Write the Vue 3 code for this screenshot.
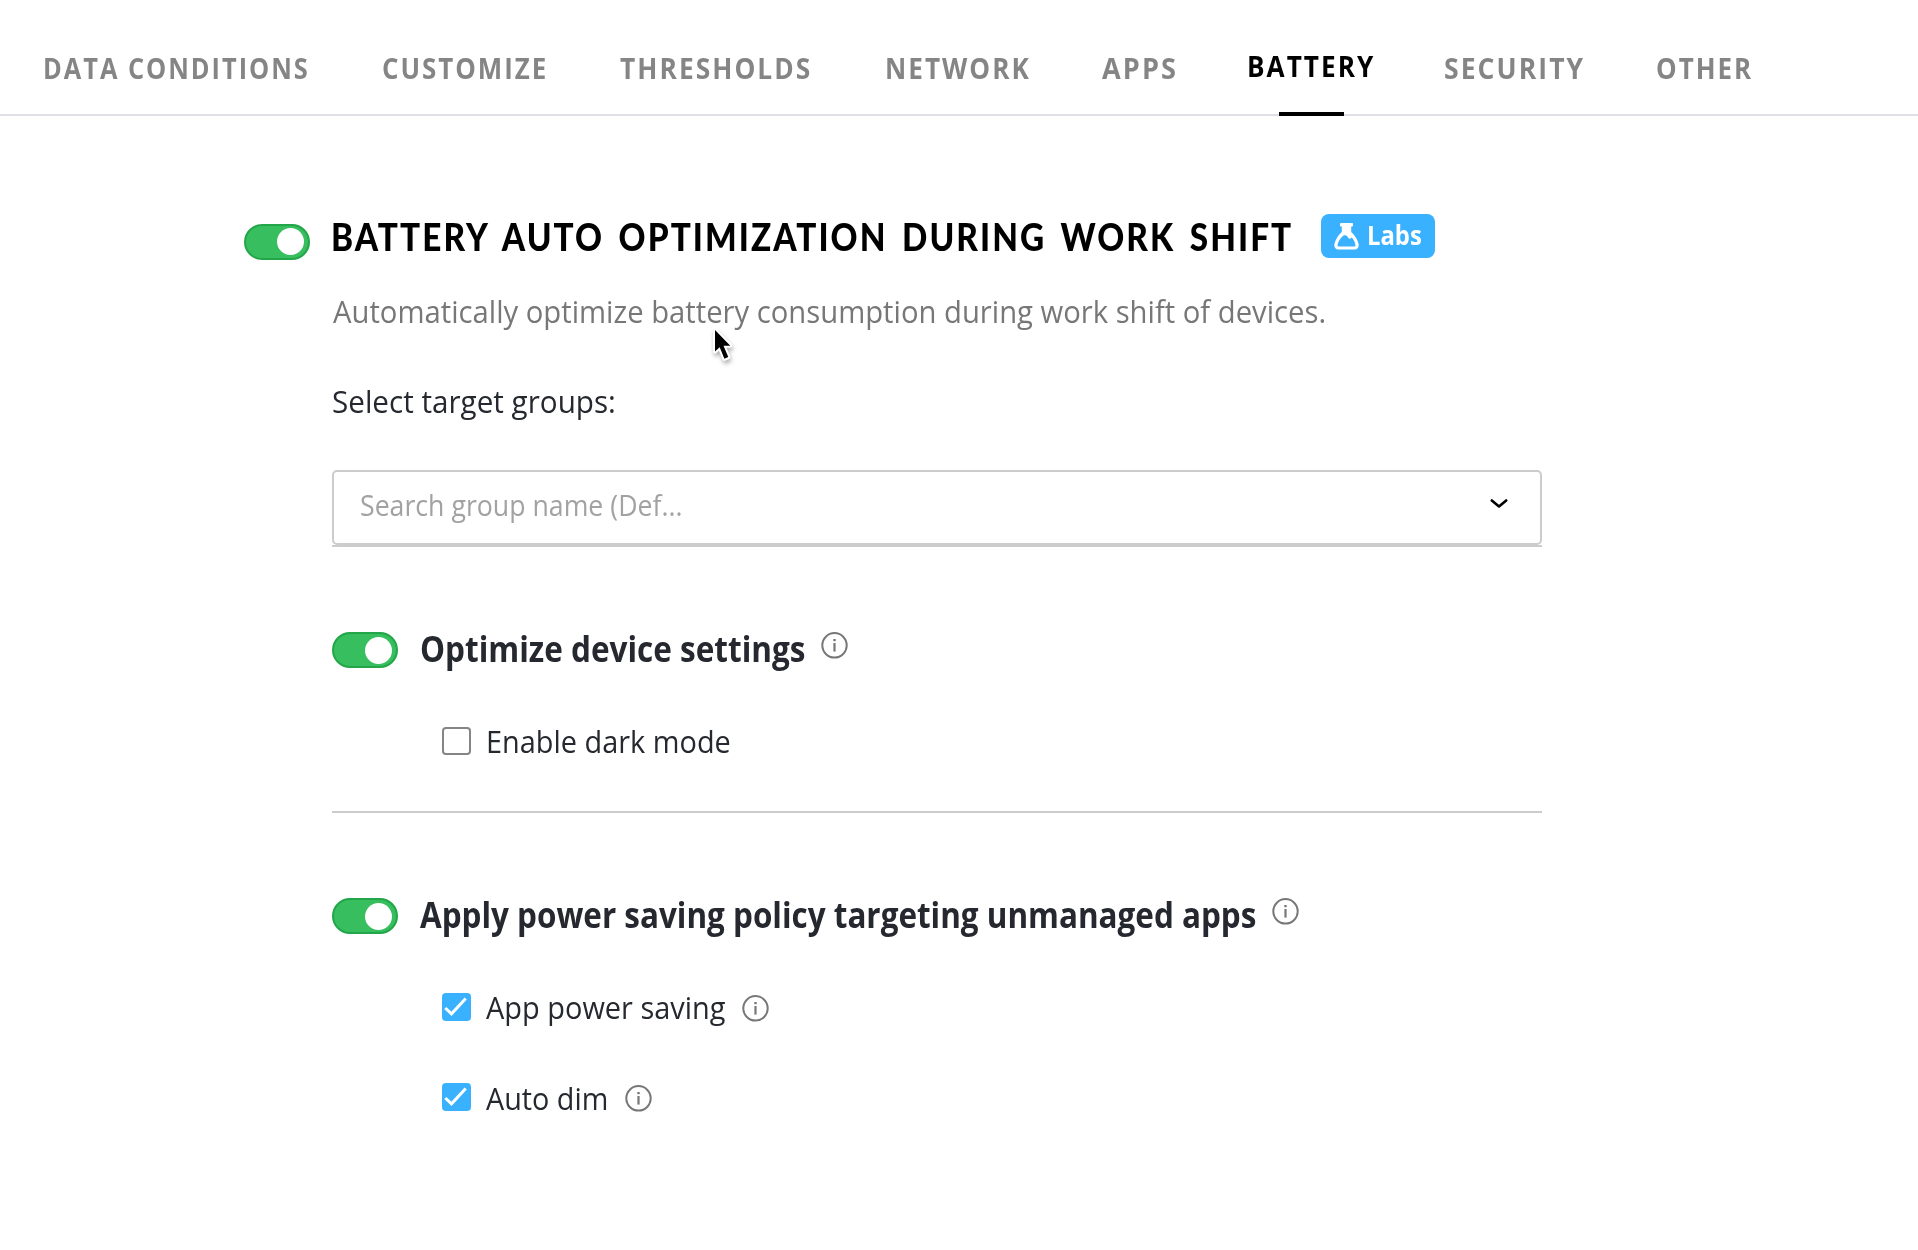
<script setup>
import { h } from 'vue'

// pitch: distance to the next tab, scale: horizontal condensing of the label
const tabs = [
  { label: 'DATA CONDITIONS', pitch: 339.2, scale: 0.891 },
  { label: 'CUSTOMIZE', pitch: 238.6, scale: 0.908 },
  { label: 'THRESHOLDS', pitch: 265, scale: 0.924 },
  { label: 'NETWORK', pitch: 216.7, scale: 0.917 },
  { label: 'APPS', pitch: 144.6, scale: 0.951 },
  { label: 'BATTERY', pitch: 197.2, scale: 0.918, active: true },
  { label: 'SECURITY', pitch: 212.1, scale: 0.932 },
  { label: 'OTHER', pitch: 100, scale: 0.91 },
]

const groups = [
  {
    title: 'Optimize device settings',
    width: 399.5,
    scale: 0.9,
    options: [{ label: 'Enable dark mode', width: 244, scale: 0.932, checked: false, info: false }],
  },
  {
    title: 'Apply power saving policy targeting unmanaged apps',
    width: 850.5,
    scale: 0.898,
    options: [
      { label: 'App power saving', width: 256, scale: 0.934, checked: true, info: true },
      { label: 'Auto dim', width: 138.5, scale: 0.928, checked: true, info: true },
    ],
  },
]

const InfoIcon = () =>
  h('svg', { width: 27, height: 27, viewBox: '0 0 27 27', fill: 'none' }, [
    h('circle', { cx: 13.5, cy: 13.3, r: 12.2, stroke: '#777', 'stroke-width': 2 }),
    h('rect', { x: 12.3, y: 7, width: 2.4, height: 2.2, fill: '#777' }),
    h('rect', { x: 12.4, y: 11, width: 2.2, height: 8.6, fill: '#777' }),
  ])
</script>

<template>
  <div class="page">
    <nav class="tabs">
      <a
        v-for="tab in tabs"
        :key="tab.label"
        class="tab"
        :class="{ active: tab.active }"
        :style="{ width: tab.pitch + 'px', '--sx': tab.scale }"
      >
        <span class="fit">{{ tab.label }}</span>
      </a>
    </nav>

    <main class="content">
      <header class="head">
        <span class="toggle"></span>
        <h1><span class="fit">BATTERY AUTO OPTIMIZATION DURING WORK SHIFT</span></h1>
        <span class="badge">
          <svg width="25" height="27" viewBox="0 0 25 27" fill="#fff">
            <path
              fill-rule="evenodd"
              d="M7 0h11a1 1 0 0 1 1 1v1.500a1 1 0 0 1-1 1h-.8v5.500c3.200 2.800 6 6.800 7.200 11.200 1 3.800-.6 6.400-3.800 6.400H4.400c-3.200 0-4.800-2.600-3.800-6.400C1.800 15.800 4.600 11.800 7.800 9V3.500H7a1 1 0 0 1-1-1V1a1 1 0 0 1 1-1zM8.600 13.200c-2.400 2.400-4.200 5-4.900 8-.4 1.600 0 2.400 1.100 2.400h15.400c1.100 0 1.500-.8 1.100-2.400-.6-2.500-1.900-4.700-3.400-6.600-1 .9-2.100 1.600-3 1-1.200-1-1.300-3-2.900-3.200-1-.1-2.500-.2-3.400.8z"
            />
          </svg>
          <span class="fit">Labs</span>
        </span>
      </header>

      <div class="body">
        <p class="desc"><span class="fit">Automatically optimize battery consumption during work shift of devices.</span></p>
        <p class="target"><span class="fit">Select target groups:</span></p>

        <div class="select-wrap">
          <div class="select">
            <span class="placeholder"><span class="fit">Search group name (Def...</span></span>
            <svg width="18" height="10" viewBox="0 0 18 10" fill="none" stroke="#000" stroke-width="2.6" stroke-linecap="round" stroke-linejoin="round">
              <path d="M1.800 1.500 9 7.500l7.200-6" />
            </svg>
          </div>
        </div>

        <section v-for="group in groups" :key="group.title" class="group">
          <div class="group-head">
            <span class="toggle"></span>
            <h2 :style="{ width: group.width + 'px', '--sx': group.scale }">
              <span class="fit">{{ group.title }}</span>
            </h2>
            <InfoIcon class="info" />
          </div>
          <div class="options">
            <label v-for="option in group.options" :key="option.label" class="option">
              <span class="check" :class="{ on: option.checked }">
                <svg v-if="option.checked" width="28" height="28" viewBox="0 0 28 28" fill="none" stroke="#fff" stroke-width="3">
                  <path d="M3.300 15 9.500 20.800 23.700 5.600" />
                </svg>
              </span>
              <span class="option-label" :style="{ width: option.width + 'px', '--sx': option.scale }">
                <span class="fit">{{ option.label }}</span>
              </span>
              <InfoIcon v-if="option.info" class="info" />
            </label>
          </div>
        </section>
      </div>
    </main>

    <svg class="cursor" width="36" height="46" viewBox="0 0 36 46">
      <path
        d="M15 10v21.500l4.700-4.300 4.700 11.600 3.900-1.700-4.800-11.300h6.800z"
        fill="#000"
        stroke="#fff"
        stroke-width="4"
        stroke-linejoin="round"
        paint-order="stroke"
      />
    </svg>
  </div>
</template>

<style>
body {
  background: #fff;
}
</style>

<style scoped>
.page {
  position: relative;
  width: 1918px;
  height: 1250px;
  overflow: hidden;
  background: #fff;
  color: #25282e;
  font-family: 'Open Sans', 'Noto Sans', sans-serif;
}

h1,
h2,
p {
  margin: 0;
}

svg {
  display: block;
  flex: none;
}

.fit {
  display: inline-block;
  white-space: nowrap;
  transform: scaleX(var(--sx));
  transform-origin: 0 50%;
}

.tabs {
  display: flex;
  box-sizing: border-box;
  height: 116px;
  padding-left: 42.5px;
  border-bottom: 2px solid #dee0e6;
}

.tab {
  position: relative;
  flex: none;
  box-sizing: border-box;
  height: 116px;
  padding-top: 48px;
  font-size: 28.5px;
  font-weight: 700;
  line-height: 40px;
  letter-spacing: 2.2px;
  color: #858585;
}

.tab.active {
  padding-top: 46px;
  color: #000;
}

.tab.active::after {
  content: '';
  position: absolute;
  left: 32px;
  bottom: 0;
  width: 65px;
  height: 4px;
  background: #000;
}

.content {
  padding: 98px 0 0 244px;
}

.head {
  display: flex;
  height: 44px;
}

.toggle {
  flex: none;
  display: flex;
  justify-content: flex-end;
  align-items: center;
  box-sizing: border-box;
  width: 66px;
  height: 36px;
  padding-right: 4px;
  border: 2px solid #22a649;
  border-radius: 18px;
  background: #37be5f;
}

.toggle::after {
  content: '';
  width: 27px;
  height: 27px;
  border-radius: 50%;
  background: #fff;
}

.head .toggle {
  margin-top: 9.500px;
}

h1 {
  --sx: 0.9;
  width: 990px;
  margin-left: 21px;
  font: 900 37px/46px Lato, sans-serif;
  letter-spacing: 2.3px;
  word-spacing: 5px;
  color: #000;
}

.badge {
  --sx: 0.917;
  display: flex;
  flex: none;
  align-items: center;
  box-sizing: border-box;
  width: 114px;
  height: 44px;
  padding-left: 12.5px;
  border-radius: 8px;
  background: #3ab1ff;
  color: #fff;
  font-size: 26px;
  font-weight: 700;
  line-height: 41px;
}

.badge .fit {
  margin: -1px 0 0 8px;
}

.body {
  width: 1210px;
  margin-left: 88px;
}

.desc,
.target {
  height: 40px;
  font-size: 31px;
  line-height: 40px;
}

.desc {
  --sx: 0.943;
  margin: 33px 0 0 1px;
  color: #777;
}

.target {
  --sx: 0.956;
  margin-top: 50px;
  color: #25282e;
}

.select-wrap {
  margin-top: 49px;
  border-bottom: 2px solid #ccc;
}

.select {
  display: flex;
  justify-content: space-between;
  box-sizing: border-box;
  height: 75px;
  padding: 12px 32px 0 26px;
  border: 2px solid #ccc;
  border-radius: 5px;
}

.placeholder {
  --sx: 0.92;
  margin-top: 1px;
  font-size: 29px;
  line-height: 40px;
  color: #a2a2a2;
}

.select svg {
  margin-top: 14.500px;
}

.group {
  height: 181px;
  padding-top: 83px;
  border-bottom: 2px solid #ccc;
}

.group:last-child {
  border-bottom: 0;
}

.group-head {
  display: flex;
  height: 36px;
}

.group-head .toggle {
  margin-top: 2px;
}

h2 {
  flex: none;
  margin-left: 22px;
  font-size: 35px;
  font-weight: 700;
  line-height: 38px;
}

.group-head .info {
  margin-top: 2px;
  margin-left: 1.500px;
}

.options {
  display: flex;
  flex-direction: column;
  gap: 50px;
  margin: 55px 0 0 110px;
}

.option {
  display: flex;
  height: 40px;
}

.check {
  flex: none;
  box-sizing: border-box;
  width: 29px;
  height: 28px;
  margin-top: 6px;
  border: 2px solid #858585;
  border-radius: 4px;
}

.check.on {
  border: 0;
  background: #3ab1ff;
}

.option-label {
  flex: none;
  margin-left: 15px;
  font-size: 31px;
  line-height: 40px;
}

.option + .option .option-label {
  line-height: 42px;
}

.option .info {
  margin-top: 8px;
}

.cursor {
  position: absolute;
  left: 700px;
  top: 320px;
  filter: drop-shadow(1px 3px 2px rgba(0, 0, 0, 0.3));
}
</style>
